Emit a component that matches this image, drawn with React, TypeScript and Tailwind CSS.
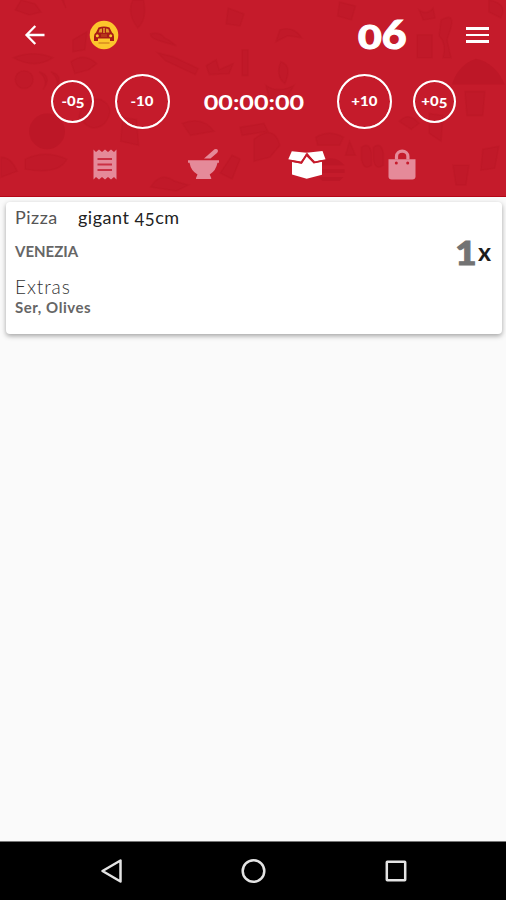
import React from "react";

const DOODLES = [
  // utensils and vegetables, drawn as flat shapes
  "M20 0l14 4 6 8-12 3-14-5z",
  "M65 8q-8-14-4-20M132 0q-6 14 5 28 10-8 6-28z",
  "M12 58q20-8 40 0-18 12-40 0z",
  "M14 80a9 9 0 1 0 18 0a9 9 0 1 0-18 0",
  "M38 72q14 4 4 18 6-9-4-18M50 72q14 4 4 18 6-9-4-18",
  "M70 62q14-10 26 2l-8 6-14 4z",
  "M72 40l14-8-2 18-12 2z",
  "M150 34q10-2 14 4l4 2 8 6-14-4-6-2q-6-2-6-6z",
  "M157 53l16 4 25 12-3 6-30-14z",
  "M206 66l10-6 3 10 14-6-4 10-20 1z",
  "M242 50h6v26h-6zM228 8l16 6-4 12-14-2z",
  "M280 30q14-4 22 8l-14-2-12 6z",
  "M281 62q12 4 4 22-10-8-4-22z",
  "M418 35h15v23h-15zM420 10q8 6 14-2l2 10-12 2z",
  "M442 20q14-8 10 8l-4 12 4 18h-8q4-14-4-22z",
  "M490 0q20 4 12 18l-12-6z",
  "M78 118q4-22 22-18 16 8 4 24-10 8-18 2z",
  "M122 118l14 2 2 26-18-4z",
  "M24 160q20-10 42 0-8 16-42 10z",
  "M182 124q20-8 32 8l-24 4z",
  "M150 188q10-16 24-6l14 4-12 6z",
  "M220 174l12-18 8 4-8 20zM240 128l24-4 4 8-26 4z",
  "M254 140q20-16 26 6l-10 12-16 4z",
  "M316 138q14-8 28 0l-4 8h-22zM350 142l6 14h-10z",
  "M362 148q8-6 10 6v12q-8 6-10-6zM374 148q8-6 10 6v12q-8 6-10-6z",
  "M430 114l14 2-2 26-12-8z",
  "M466 92h20l-2 24h-16zM484 150l16-3-4 22-14 2z",
  "M454 166h16l-3 20h-10zM400 122q10-10 20 2l-8 6z",
  "M0 158q10 0 16 14l-16 6z",
  "M340 2l16 4-4 14-14-4zM266 86q12 8 28 0l-8 14-16 2z",
];

// the few shapes that stand out more than the rest
const STRONG_DOODLES = [
  "M453 85q6-20 24-26 20 4 29 26z",
  "M28 132a18 18 0 1 0 36 0a18 18 0 1 0-36 0",
  "M318 166q14-14 27 0zM317 170h28v4h-28zM319 178h25l-4 4h-17z",
];

function DoodlePattern() {
  return (
    <svg className="absolute inset-0 h-full w-full" viewBox="0 0 506 197" aria-hidden="true">
      <g fill="#a80d1d" fillOpacity="0.1" stroke="#a00e1c" strokeOpacity="0.11" strokeWidth="1.5">
        {DOODLES.map((d) => (
          <path key={d} d={d} />
        ))}
      </g>
      <g fill="#a80d1d" fillOpacity="0.25">
        {STRONG_DOODLES.map((d) => (
          <path key={d} d={d} />
        ))}
      </g>
    </svg>
  );
}

function TimeButton({ sign, children, large }: { sign: string; children: React.ReactNode; large?: boolean }) {
  return (
    <button
      type="button"
      className={`flex shrink-0 items-center justify-center rounded-full border-2 border-white font-black text-white outline-[0.5px] -outline-offset-2 outline-white/60 ${
        large ? "h-[55px] w-[55px] text-[13px]" : "h-[43px] w-[43px] text-[13px]"
      }`}
    >
      <span className={`inline-block leading-none ${large ? "scale-x-[1.15]" : "scale-x-[1.15] pt-[2px]"}`}>
        {sign}
        {children}
      </span>
    </button>
  );
}

function BackIcon() {
  return (
    <svg width="22" height="22" viewBox="0 0 22 22" fill="none" stroke="#fff" strokeWidth="2.3">
      <path d="M20.500 11H3M11.300 2L2.500 11l8.800 9" />
    </svg>
  );
}

function CarBadge() {
  return (
    <svg width="30" height="30" viewBox="0 0 30 30">
      <circle cx="15" cy="15" r="14.300" fill="#fcc62c" />
      <path d="M9.500 7.500q5.500-2 11 0l2.500 5q2 1 2 4v4.500h-4v-2.500h-12v2.500H5v-4.500q0-3 2-4z" fill="#a71a17" />
      <path d="M10.700 9l2.300-.500v4h-3.500zM14.200 8h1.600v5h-1.600zM17 8.500l2.300.500 1.200 3.500H17z" fill="#e09a2b" />
      <path d="M13 14v3M15 14v3M17 14v3" stroke="#c4541f" />
      <circle cx="8.300" cy="15.800" r="1.500" fill="#fcc62c" />
      <circle cx="21.700" cy="15.800" r="1.500" fill="#fcc62c" />
      <path d="M9.500 23h11" stroke="#d88a20" strokeWidth="1.500" />
    </svg>
  );
}

function ReceiptIcon() {
  return (
    <svg width="24" height="31" viewBox="0 0 24 31">
      <path
        d="M.5.500l2.500 2.500L6 .500 9 3l3-2.500L15 3l3-2.500L21 3l2.500-2.500v30L21 28l-3 2.500-3-2.500-3 2.500L9 28l-3 2.500L3 28 .5 30.500z"
        fill="#e58a99"
      />
      <path d="M4.500 10h14.500M4.500 15.500h14.500M4.500 21h14.500" stroke="#cb3044" strokeWidth="2" />
    </svg>
  );
}

function MortarIcon() {
  return (
    <svg width="32" height="32" viewBox="0 0 32 32" fill="#e58a99">
      <path d="M16 10.500L26.500 1.300q2-1 3.200.400.800 1.600-.500 3L22.500 10.500z" />
      <path d="M0 12.200h31v2.600h-1.500q-1.500 8-7.800 11.700l1.500 3.500v1H8v-1L9.500 26.500Q3 23 1.500 14.800H0z" />
    </svg>
  );
}

function OpenBoxIcon() {
  return (
    <svg width="38" height="29" viewBox="0 0 38 29" fill="#fff">
      <path d="M3.800 1.200L18.500 2.800 34.500 1 37.500 9.300l-10.500 2.200L18.800 3.500l-6 8L.300 9.300z" />
      <path d="M4 12l9.800 1.800 4.900-7.300 7 7 8.300-1.800v13l-15.300 4L4 24.500z" />
      <path d="M18.800 3.500l-5.300 9.300-9.500-1.800M18.800 3.500l7.200 8.900 8-1.600" fill="none" stroke="#c51b2b" strokeWidth="1.500" />
    </svg>
  );
}

function BagIcon() {
  return (
    <svg width="28" height="31" viewBox="0 0 28 31">
      <path d="M.5 10.300h27v17q0 3.200-3.200 3.200H3.700Q.5 30.500.5 27.300z" fill="#e58a99" />
      <path d="M8.500 10.500V7.500a5.700 5.300 0 0 1 11.400 0v3" fill="none" stroke="#e58a99" strokeWidth="3.200" />
      <circle cx="8.300" cy="14" r="1.500" fill="#c51b2b" />
      <circle cx="19.700" cy="14" r="1.500" fill="#c51b2b" />
    </svg>
  );
}

function Header() {
  return (
    <header className="relative h-[197px] shrink-0 border-b border-[#b50717] bg-[#c51b2b] text-white">
      <DoodlePattern />
      <div className="relative">
        <div className="flex h-[70px] items-center pl-6 pr-[17px]">
          <BackIcon />
          <div className="ml-[43px]">
            <CarBadge />
          </div>
          <div className="mr-[59px] ml-auto flex w-[49px] items-baseline justify-between pb-[2px] leading-none font-black">
            <span className="inline-block origin-left scale-x-[1.24] text-[33px] [-webkit-text-stroke:1px_white]">0</span>
            <span className="inline-block origin-right scale-x-110 text-[39px] [-webkit-text-stroke:1px_white]">6</span>
          </div>
          <div className="flex w-[23px] flex-col gap-[4px]">
            <div className="h-[2.5px] bg-white" />
            <div className="h-[2.5px] bg-white" />
            <div className="h-[2.5px] bg-white" />
          </div>
        </div>
        <div className="flex h-[63px] items-center justify-between pl-[51px] pr-[50px]">
          <TimeButton sign="-">
            0<span className="align-[-2px]">5</span>
          </TimeButton>
          <TimeButton sign="-" large>
            10
          </TimeButton>
          <div className="mx-3 flex w-[102px] justify-center pt-[3px] text-[21.5px] leading-none font-bold">
            <span className="inline-block scale-x-[1.17]">00:00:00</span>
          </div>
          <TimeButton sign="+" large>
            10
          </TimeButton>
          <TimeButton sign="+">
            0<span className="align-[-2px]">5</span>
          </TimeButton>
        </div>
        <div className="flex h-[62px] items-center pl-[93px]">
          <ReceiptIcon />
          <div className="ml-[71px]">
            <MortarIcon />
          </div>
          <div className="ml-[68px]">
            <OpenBoxIcon />
          </div>
          <div className="ml-[62px]">
            <BagIcon />
          </div>
        </div>
      </div>
    </header>
  );
}

function OrderCard() {
  return (
    <section className="mr-[4px] ml-[6px] mt-[5px] flex h-[132px] justify-between rounded-[4px] bg-white pl-[9px] pr-[11px] shadow-[0_2px_5px_rgba(0,0,0,0.35)]">
      <div className="pt-[5px]">
        <p className="flex h-5 items-center text-[18px] leading-5">
          <span className="w-[63px] tracking-[0.5px] text-[#555]">Pizza</span>
          <span className="tracking-[0.5px] text-[#222]">
            gigant <span className="align-[-2px] text-[17px] leading-none">45</span>cm
          </span>
        </p>
        <p className="mt-[14px] h-5 text-[15px] leading-5 font-bold text-[#666]">VENEZIA</p>
        <p className="mt-[16px] h-5 text-[19px] leading-5 tracking-[0.9px] font-light text-[#333]">Extras</p>
        <p className="h-5 text-[15px] leading-5 tracking-[0.55px] font-bold text-[#666]">Ser, Olives</p>
      </div>
      <div className="mt-[35px] flex h-8 items-center">
        <span className="inline-block origin-right scale-x-[1.15] text-[32px] leading-8 font-black text-[#737373] [-webkit-text-stroke:1px_#737373]">
          1
        </span>
        <span className="pb-[5px] pl-px text-[25px] leading-8 font-bold text-[#1c1c1c]">x</span>
      </div>
    </section>
  );
}

function NavigationBar() {
  return (
    <nav className="flex h-[59px] shrink-0 items-center justify-between border-t border-[#777] bg-black pl-[100px] pr-[99px]">
      <svg width="23" height="26" viewBox="0 0 23 26" fill="none" stroke="#e4e4e4" strokeWidth="2.500">
        <path d="M20.500 2.500v21L2.500 13z" strokeLinejoin="round" />
      </svg>
      <svg width="26" height="26" viewBox="0 0 26 26" fill="none" stroke="#e4e4e4" strokeWidth="2.500">
        <circle cx="12.500" cy="13" r="10.800" />
      </svg>
      <svg width="22" height="22" viewBox="0 0 22 22" fill="none" stroke="#e4e4e4" strokeWidth="2.500">
        <rect x="1.800" y="1.800" width="18.400" height="18.400" rx="0.500" />
      </svg>
    </nav>
  );
}

export default function App() {
  return (
    <div className="flex h-[900px] w-[506px] flex-col overflow-hidden bg-[#fafafa] font-['Lato','Liberation_Sans',sans-serif]">
      <Header />
      <main className="flex-1">
        <OrderCard />
      </main>
      <NavigationBar />
    </div>
  );
}
